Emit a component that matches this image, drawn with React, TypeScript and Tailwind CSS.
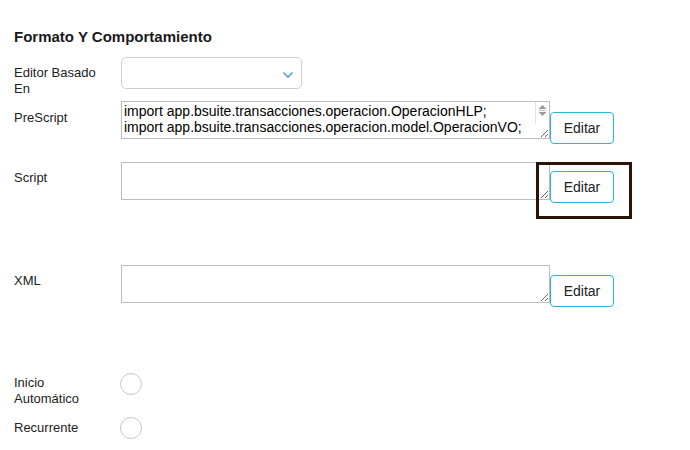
import { useState } from "react";

const prescript = [
  "import app.bsuite.transacciones.operacion.OperacionHLP;",
  "import app.bsuite.transacciones.operacion.model.OperacionVO;",
].join("\n");

function EditButton({ className = "" }: { className?: string }) {
  return (
    <button
      type="button"
      className={`h-[32px] w-[64px] shrink-0 rounded-[4px] border border-[#2cb3d9] bg-white text-[14px] text-[#222] ${className}`}
    >
      Editar
    </button>
  );
}

function Radio({ checked, onClick }: { checked: boolean; onClick: () => void }) {
  return (
    <button
      type="button"
      onClick={onClick}
      className="flex h-[22px] w-[22px] items-center justify-center rounded-full border border-[#c8c8c8] bg-white"
    >
      {checked && <span className="h-[10px] w-[10px] rounded-full bg-[#2cb3d9]" />}
    </button>
  );
}

export default function App() {
  const [inicio, setInicio] = useState(false);
  const [recurrente, setRecurrente] = useState(false);

  return (
    <main
      className="min-h-screen bg-white pl-[14px] text-[13px] leading-[16px] text-[#222]"
      style={{ fontFamily: '"Liberation Sans", Arial, sans-serif' }}
    >
      <h2 className="pt-[27px] text-[15px] font-bold leading-[20px] text-[#1a1a1a]">
        Formato Y Comportamiento
      </h2>

      {/* Editor Basado En */}
      <div className="mt-[10px] flex h-[44px] items-start">
        <label className="w-[107px] pt-[8px]">
          Editor Basado
          <br />
          En
        </label>
        <div className="relative h-[32px] w-[181px] rounded-[5px] border border-[#cfcfcf] bg-white">
          <svg
            className="absolute right-[7px] top-[13px]"
            width="12"
            height="8"
            viewBox="0 0 12 8"
            fill="none"
          >
            <path d="M1.5 1.5 6 6l4.5-4.5" stroke="#5f9bd8" strokeWidth="1.6" />
          </svg>
        </div>
      </div>

      {/* PreScript */}
      <div className="flex h-[61px] items-start">
        <label className="w-[107px] pt-[9px]">PreScript</label>
        <div className="flex items-start">
          <div className="relative">
            <textarea
              readOnly
              value={prescript}
              className="block h-[38px] w-[429px] overflow-hidden whitespace-pre border border-[#bdbdbd] py-[1px] pl-[2px] pr-[16px] text-[14px] leading-[16px] text-black outline-none"
            />
            {/* scrollbar */}
            <div className="pointer-events-none absolute right-[1px] top-[1px] flex h-[22px] w-[14px] flex-col items-center border-l border-[#e3e3e3] bg-white pt-[3px]">
              <svg width="9" height="12" viewBox="0 0 9 12">
                <path d="M4.5 0 8.5 4H0.5Z" fill="#9a9a9a" />
                <path d="M0.5 5.5h8" stroke="#c4c4c4" strokeWidth="1" />
                <path d="M0.5 7H8.5L4.5 11Z" fill="#9a9a9a" />
              </svg>
            </div>
          </div>
          <EditButton className="mt-[11px]" />
        </div>
      </div>

      {/* Script */}
      <div className="flex h-[103px] items-start">
        <label className="w-[107px] pt-[8px]">Script</label>
        <div className="relative flex items-start">
          <textarea
            readOnly
            value=""
            className="block h-[38px] w-[429px] border border-[#bdbdbd] px-[2px] py-[1px] text-[14px] outline-none"
          />
          <EditButton className="mt-[9px]" />
          <div className="pointer-events-none absolute left-[415px] top-0 h-[57px] w-[96px] border-[3px] border-[#2b1109]" />
        </div>
      </div>

      {/* XML */}
      <div className="flex h-[108px] items-start">
        <label className="w-[107px] pt-[8px]">XML</label>
        <div className="flex items-start">
          <textarea
            readOnly
            value=""
            className="block h-[38px] w-[429px] border border-[#bdbdbd] px-[2px] py-[1px] text-[14px] outline-none"
          />
          <EditButton className="mt-[10px]" />
        </div>
      </div>

      {/* Inicio Automático */}
      <div className="flex h-[44px] items-start">
        <label className="w-[106px] pt-[2px]">
          Inicio
          <br />
          Automático
        </label>
        <Radio checked={inicio} onClick={() => setInicio(!inicio)} />
      </div>

      {/* Recurrente */}
      <div className="flex h-[33px] items-start">
        <label className="w-[106px] pt-[3px]">Recurrente</label>
        <Radio checked={recurrente} onClick={() => setRecurrente(!recurrente)} />
      </div>
    </main>
  );
}
